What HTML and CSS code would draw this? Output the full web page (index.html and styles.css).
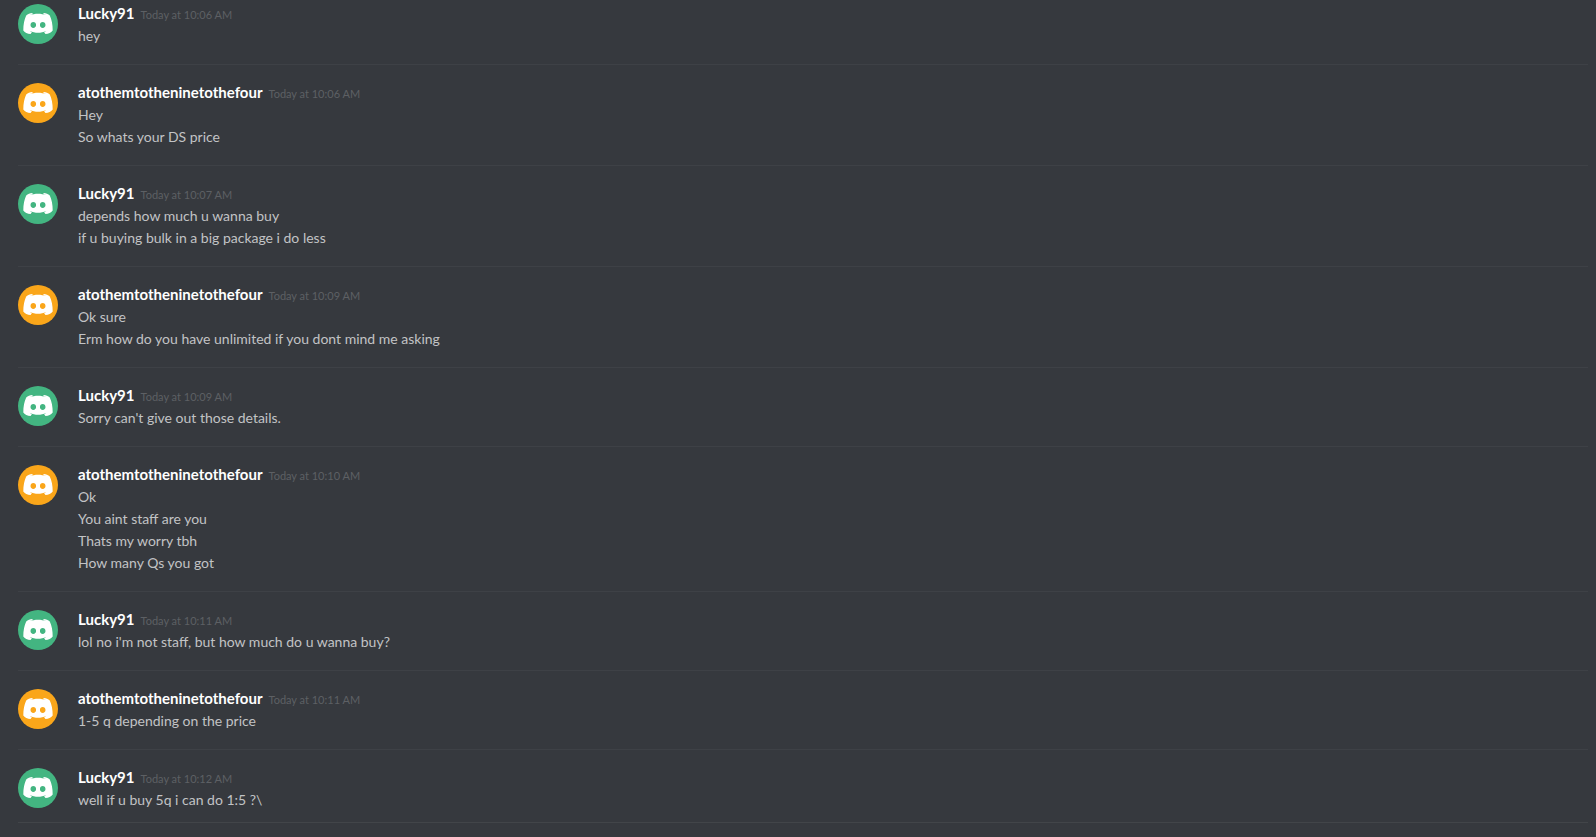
FILE: index.html
```html
<!DOCTYPE html>
<html lang="en">
<head>
<meta charset="utf-8">
<title>Direct messages</title>
<link rel="stylesheet" href="styles.css">
</head>
<body>
<svg class="sprite" aria-hidden="true">
  <symbol id="face" viewBox="0 0 40 40">
    <path fill="#fff" fill-rule="evenodd" d="M14.300 9.100C11.900 9.300 9.900 10.200 8.200 11.400C6.300 15.400 5.300 20.300 5.300 26.600C7 28.900 9.400 30 12.500 30L13.900 28.200C13.100 27.900 12.400 27.500 11.800 26.900C17 29.300 23 29.300 28.200 26.900C27.600 27.500 26.900 27.900 26.100 28.200L27.500 30C30.600 30 33 28.900 34.700 26.600C34.700 20.300 33.700 15.400 31.800 11.400C30.100 10.200 28.100 9.300 25.700 9.100L25.300 9.900C26.500 10.300 27.400 10.700 28.300 11.300C23 9.300 17 9.300 11.700 11.300C12.600 10.700 13.500 10.300 14.700 9.900ZM15.300 18.100C13.700 18.100 12.500 19.400 12.500 21S13.700 23.900 15.300 23.900S18.100 22.600 18.100 21S16.900 18.100 15.300 18.100ZM24.700 18.100C23.100 18.100 21.900 19.400 21.900 21S23.100 23.900 24.700 23.900S27.500 22.600 27.500 21S26.300 18.100 24.700 18.100Z"/>
  </symbol>
</svg>
<main class="chat">
  <article class="group">
    <svg class="avatar green" role="img" aria-label="Lucky91"><use href="#face"/></svg>
    <div class="body">
      <header class="head"><h2 class="name">Lucky91</h2><time class="time">Today at 10:06 AM</time></header>
      <p class="text">hey</p>
    </div>
  </article>
  <article class="group">
    <svg class="avatar orange" role="img" aria-label="atothemtotheninetothefour"><use href="#face"/></svg>
    <div class="body">
      <header class="head"><h2 class="name">atothemtotheninetothefour</h2><time class="time">Today at 10:06 AM</time></header>
      <p class="text">Hey</p>
      <p class="text">So whats your DS price</p>
    </div>
  </article>
  <article class="group">
    <svg class="avatar green" role="img" aria-label="Lucky91"><use href="#face"/></svg>
    <div class="body">
      <header class="head"><h2 class="name">Lucky91</h2><time class="time">Today at 10:07 AM</time></header>
      <p class="text">depends how much u wanna buy</p>
      <p class="text">if u buying bulk in a big package i do less</p>
    </div>
  </article>
  <article class="group">
    <svg class="avatar orange" role="img" aria-label="atothemtotheninetothefour"><use href="#face"/></svg>
    <div class="body">
      <header class="head"><h2 class="name">atothemtotheninetothefour</h2><time class="time">Today at 10:09 AM</time></header>
      <p class="text">Ok sure</p>
      <p class="text">Erm how do you have unlimited if you dont mind me asking</p>
    </div>
  </article>
  <article class="group">
    <svg class="avatar green" role="img" aria-label="Lucky91"><use href="#face"/></svg>
    <div class="body">
      <header class="head"><h2 class="name">Lucky91</h2><time class="time">Today at 10:09 AM</time></header>
      <p class="text">Sorry can't give out those details.</p>
    </div>
  </article>
  <article class="group">
    <svg class="avatar orange" role="img" aria-label="atothemtotheninetothefour"><use href="#face"/></svg>
    <div class="body">
      <header class="head"><h2 class="name">atothemtotheninetothefour</h2><time class="time">Today at 10:10 AM</time></header>
      <p class="text">Ok</p>
      <p class="text">You aint staff are you</p>
      <p class="text">Thats my worry tbh</p>
      <p class="text">How many Qs you got</p>
    </div>
  </article>
  <article class="group">
    <svg class="avatar green" role="img" aria-label="Lucky91"><use href="#face"/></svg>
    <div class="body">
      <header class="head"><h2 class="name">Lucky91</h2><time class="time">Today at 10:11 AM</time></header>
      <p class="text">lol no i'm not staff, but how much do u wanna buy?</p>
    </div>
  </article>
  <article class="group">
    <svg class="avatar orange" role="img" aria-label="atothemtotheninetothefour"><use href="#face"/></svg>
    <div class="body">
      <header class="head"><h2 class="name">atothemtotheninetothefour</h2><time class="time">Today at 10:11 AM</time></header>
      <p class="text">1-5 q depending on the price</p>
    </div>
  </article>
  <article class="group">
    <svg class="avatar green" role="img" aria-label="Lucky91"><use href="#face"/></svg>
    <div class="body">
      <header class="head"><h2 class="name">Lucky91</h2><time class="time">Today at 10:12 AM</time></header>
      <p class="text">well if u buy 5q i can do 1:5 ?\</p>
    </div>
  </article>
</main>
</body>
</html>
```
FILE: styles.css
```css
body {
  margin: 0;
  background: #36393e;
  color: #c2c3c5;
  font-family: Lato, "Open Sans", sans-serif;
  font-size: 14px;
  line-height: 22px;
}

.sprite {
  display: none;
}

.chat {
  padding: 3px 8px 0 18px;
}

.group {
  display: flex;
  gap: 20px;
  padding: 17px 0;
  border-bottom: 1px solid #3e4146;
}

.group:first-child {
  padding-top: 0;
}

.group:last-child {
  padding-bottom: 11px;
  border-color: #424549;
}

.avatar {
  flex: none;
  width: 40px;
  height: 40px;
  margin-top: 1px;
  border-radius: 50%;
}

.green {
  background: #43b581;
}

.orange {
  background: #faa61a;
}

.body {
  flex: 1;
  min-width: 0;
}

.head {
  display: flex;
  align-items: baseline;
  gap: 6px;
  padding-bottom: 2px;
}

.name {
  margin: 0;
  color: #fff;
  font-size: 15px;
  font-weight: 700;
  line-height: 20px;
}

.time {
  color: #5d6064;
  font-size: 11px;
  line-height: 16px;
}

.text {
  margin: 0;
}
```
